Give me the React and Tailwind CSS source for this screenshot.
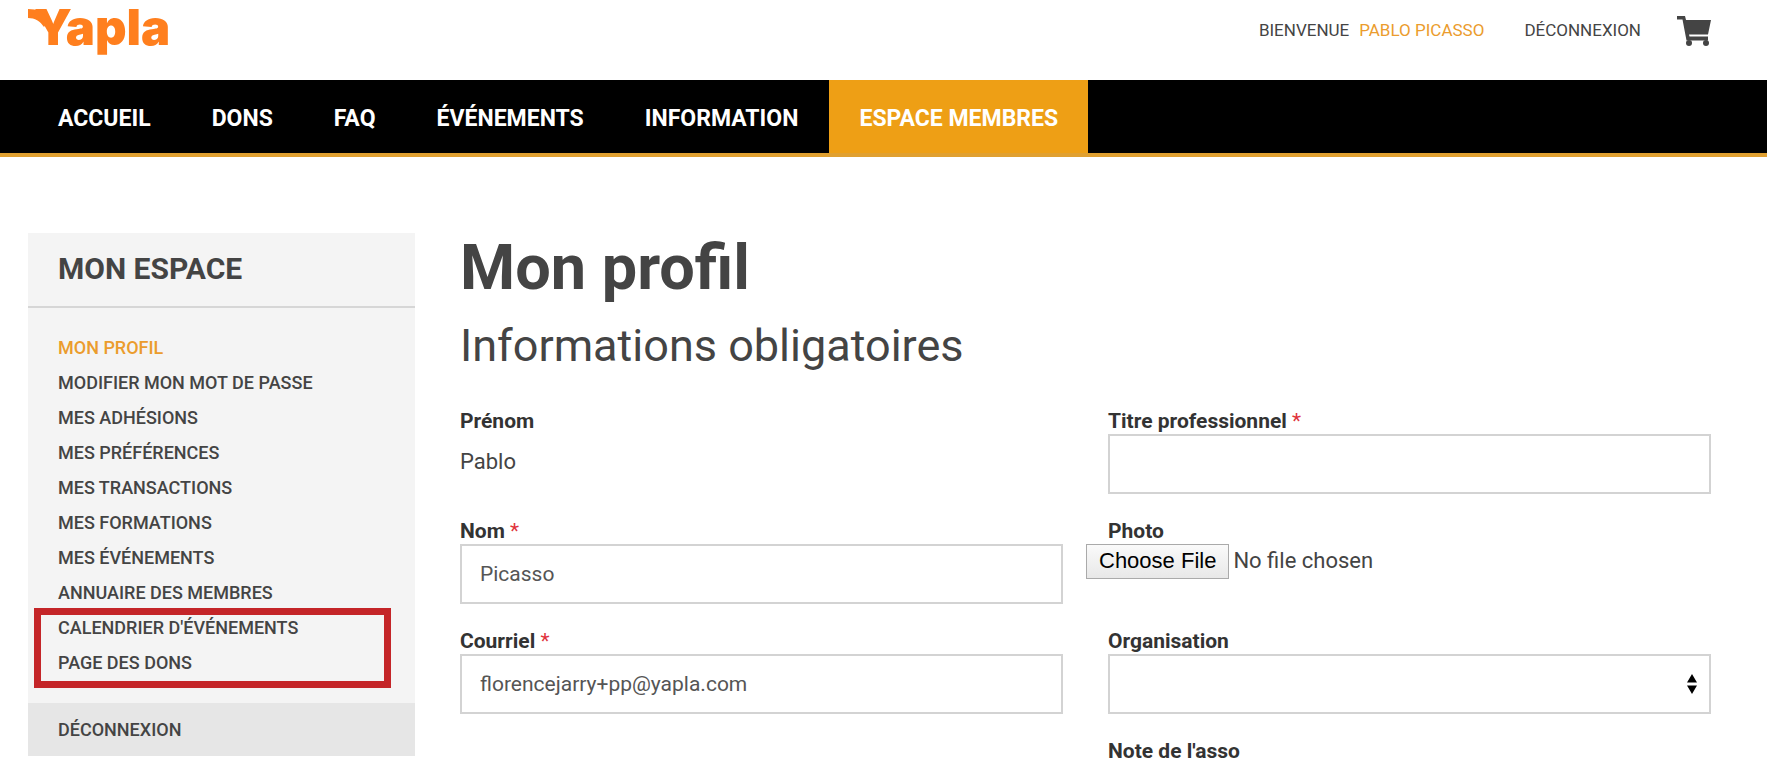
const NAV = ['Accueil', 'Dons', 'FAQ', 'Événements', 'Information', 'Espace membres'];

const MENU = [
  'Mon profil',
  'Modifier mon mot de passe',
  'Mes adhésions',
  'Mes préférences',
  'Mes transactions',
  'Mes formations',
  'Mes événements',
  'Annuaire des membres',
];

const HIGHLIGHTED = ["Calendrier d'événements", 'Page des dons'];

function CartIcon() {
  return (
    <svg viewBox="0 0 34 30" className="h-[30px] w-[34px] fill-current">
      <path d="M0 0H8L9 4H34L31 18.500H12L12.500 20.500H31V24.500H9.500L5.500 3.500H0Z" />
      <circle cx="12" cy="27" r="3" />
      <circle cx="29" cy="27" r="3" />
    </svg>
  );
}

function Label({ id, required, children }) {
  return (
    <label htmlFor={id} className="block pt-[2px] text-[21px] leading-[25px] font-bold text-[#333]">
      {children}
      {required && <span className="font-normal text-[#e0333c]"> *</span>}
    </label>
  );
}

function TextField({ id, label, required, value }) {
  return (
    <div className="h-[110px]">
      <Label id={id} required={required}>{label}</Label>
      <input
        id={id}
        type="text"
        defaultValue={value}
        className="block h-[60px] w-full border-2 border-[#d3d3d3] bg-white px-[18px] text-[21px] text-[#555]"
      />
    </div>
  );
}

export default function App() {
  return (
    <div className="min-h-screen bg-white font-['Roboto',sans-serif] text-[#444]">
      <header className="flex h-20 items-start justify-between pr-14 pl-7">
        <a href="#" className="relative pl-[6px] font-['Inter',sans-serif] text-[49px] leading-[55px] font-black text-[#ff7f1e]">
          Yapla
          {/* curl on the left arm of the Y */}
          <svg viewBox="0 0 20 18" className="absolute top-[9px] left-0 h-[18px] w-5 fill-current">
            <path d="M0 0C9 0 16 3 20 12L16 18C12 12 7 9 0 9Z" />
          </svg>
        </a>
        <div className="flex h-[62px] items-center text-[17px] uppercase">
          <span>Bienvenue</span>
          <a href="#" className="ml-[10px] text-[#eb9c2d]">Pablo Picasso</a>
          <a href="#" className="ml-10">Déconnexion</a>
          <a href="#" aria-label="Panier" className="ml-9">
            <CartIcon />
          </a>
        </div>
      </header>

      <nav className="flex h-[77px] border-b-4 border-[#e0a030] bg-black text-[23px] font-bold text-white uppercase">
        <div className="flex gap-px pl-7">
          {NAV.map(item => (
            <a
              key={item}
              href="#"
              className={item === 'Espace membres' ? 'flex items-center bg-[#ee9f15] px-[30px] pt-[6px]' : 'flex items-center px-[30px] pt-[6px]'}
            >
              {item}
            </a>
          ))}
        </div>
      </nav>

      <div className="flex items-start gap-[45px] pt-[76px] pr-14 pl-7">
        <aside className="w-[387px] shrink-0 bg-[#f4f4f4] uppercase">
          <h2 className="border-b-2 border-[#d6d6d6] px-[30px] pt-4 pb-[17px] text-[30px] leading-10 font-bold">Mon espace</h2>
          <ul className="px-[30px] pt-[22px] text-[18px] leading-[35px] font-medium">
            {MENU.map((item, i) => (
              <li key={item}>
                <a href="#" className={i === 0 ? 'text-[#eb9c2d]' : ''}>{item}</a>
              </li>
            ))}
          </ul>
          <div className="relative px-[30px] pb-[23px] text-[18px] leading-[35px] font-medium">
            <ul>
              {HIGHLIGHTED.map(item => (
                <li key={item}><a href="#">{item}</a></li>
              ))}
            </ul>
            <div className="pointer-events-none absolute -top-[2px] right-6 left-[6px] h-20 border-7 border-[#c42528]" />
          </div>
          <a href="#" className="block bg-[#e6e6e6] px-[30px] text-[18px] leading-[53px] font-medium">Déconnexion</a>
        </aside>

        <main className="min-w-0 flex-1">
          <h1 className="text-[63px] leading-[70px] font-bold">Mon profil</h1>
          <h2 className="pt-[13px] text-[45px] leading-[60px]">Informations obligatoires</h2>
          <form className="grid grid-cols-2 gap-x-[45px] pt-[31px]">
            <div>
              <div className="h-[110px]">
                <p className="pt-[2px] text-[21px] leading-[25px] font-bold text-[#333]">Prénom</p>
                <p className="pt-[14px] text-[22px] leading-7">Pablo</p>
              </div>
              <TextField id="nom" label="Nom" required value="Picasso" />
              <TextField id="courriel" label="Courriel" required value="florencejarry+pp@yapla.com" />
            </div>
            <div>
              <TextField id="titre" label="Titre professionnel" required />
              <div className="h-[110px]">
                <Label id="photo">Photo</Label>
                <input
                  id="photo"
                  type="file"
                  className="-ml-[22px] block text-[22px] leading-8 file:mr-1 file:h-[35px] file:border file:border-solid file:border-[#aaa] file:bg-linear-to-b file:from-[#fafafa] file:to-[#e8e8e8] file:px-3 file:pb-1 file:font-['Liberation_Sans'] file:text-[22px] file:text-black"
                />
              </div>
              <div className="h-[110px]">
                <Label id="organisation">Organisation</Label>
                <div className="relative">
                  <select id="organisation" className="block h-[60px] w-full appearance-none border-2 border-[#d3d3d3] bg-white px-[18px] text-[21px] text-[#555]">
                    <option></option>
                  </select>
                  <svg viewBox="0 0 10 20" className="pointer-events-none absolute top-5 right-[14px] h-5 w-[10px] fill-black">
                    <path d="M5 0 10 8.500H0ZM5 20 0 11.500h10Z" />
                  </svg>
                </div>
              </div>
              <p className="pt-[2px] text-[21px] leading-[25px] font-bold text-[#333]">Note de l'asso</p>
            </div>
          </form>
        </main>
      </div>
    </div>
  );
}
